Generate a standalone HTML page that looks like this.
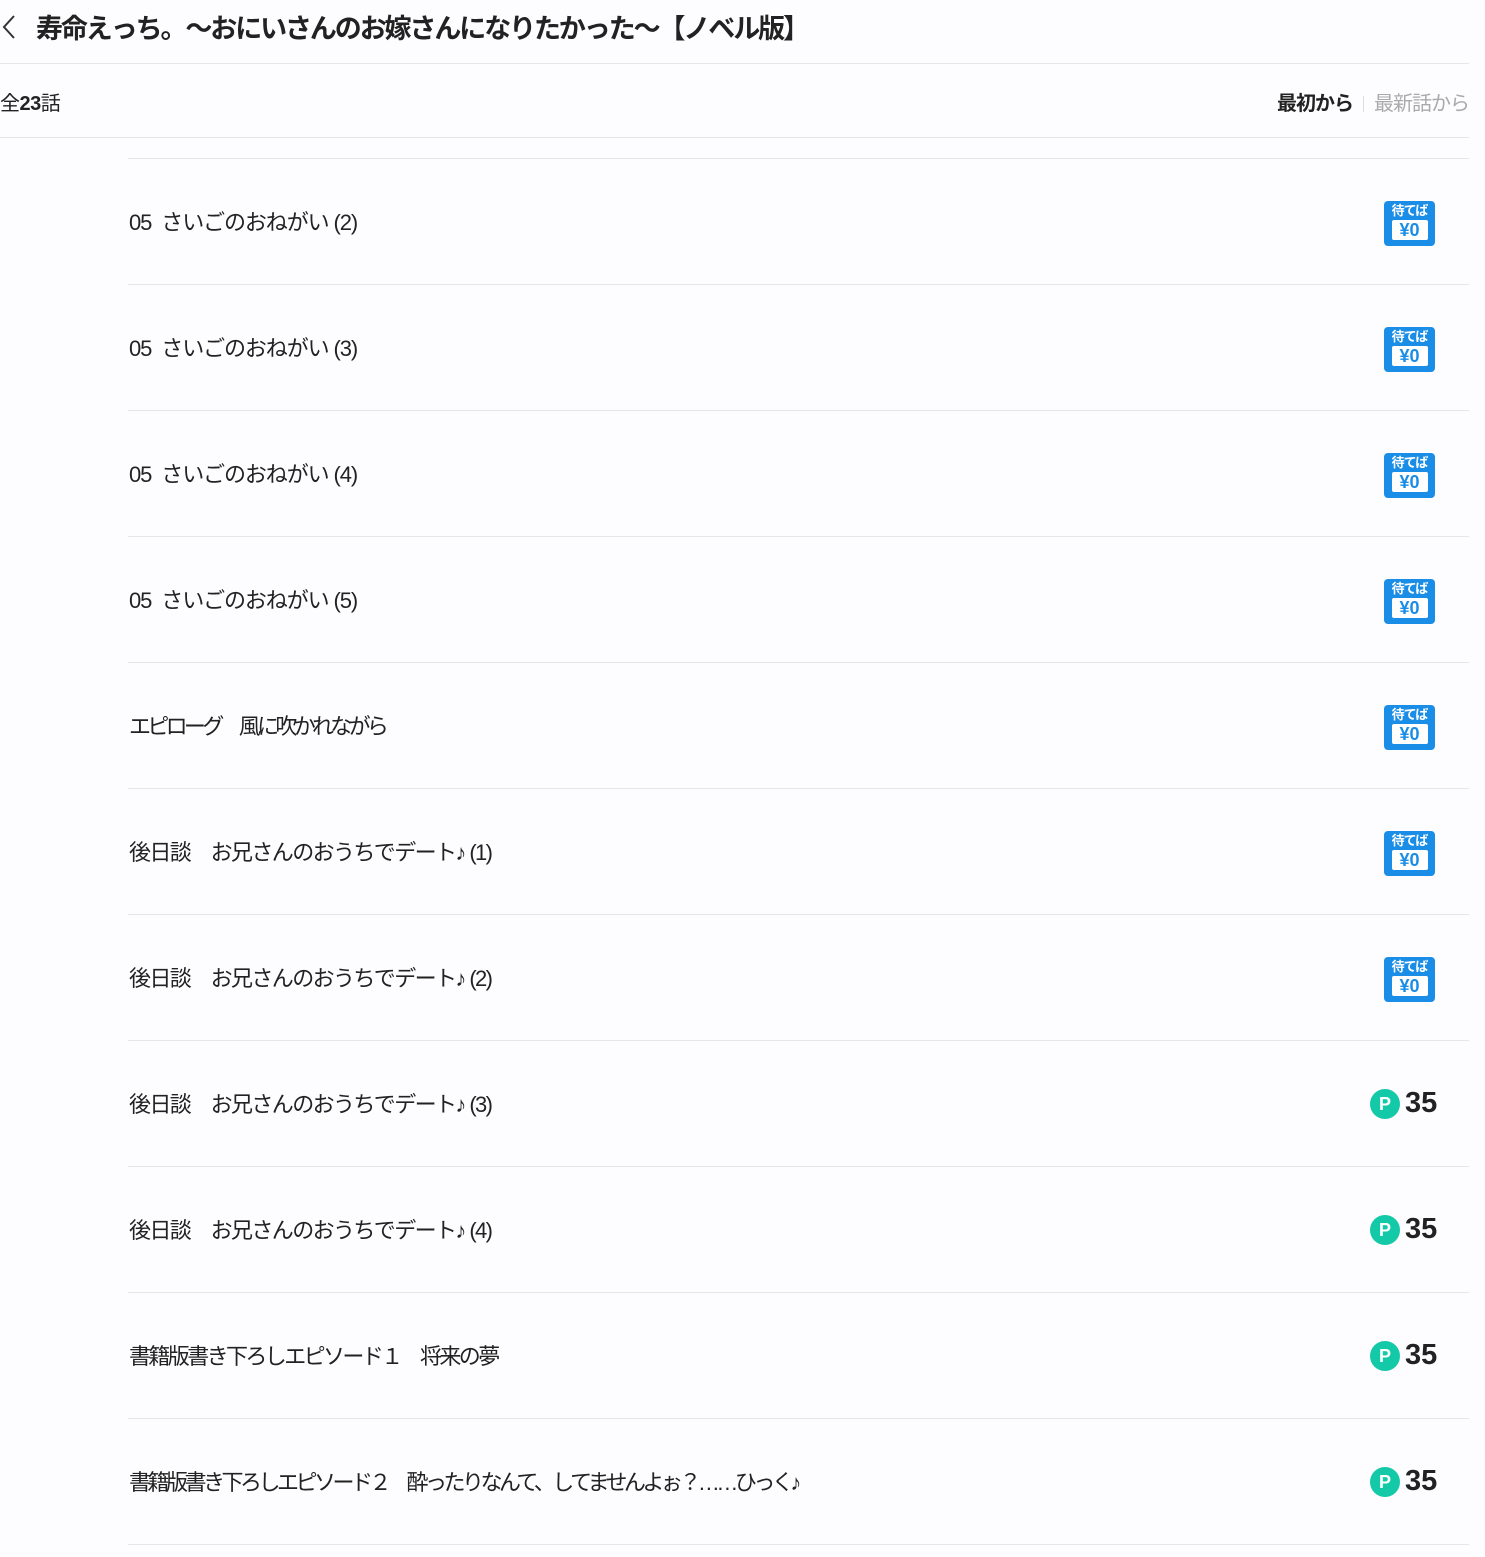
<!DOCTYPE html>
<html><head><meta charset="utf-8"><style>
body{margin:0;background:#fdfcfe;width:1485px;height:1557px;overflow:hidden;font-family:"Liberation Sans","Noto Sans CJK JP",sans-serif;color:#222}
.hdr{position:absolute;left:0;top:0;width:1469px;height:63px;border-bottom:1px solid #e6e6e6}
.hdr svg{position:absolute;left:2px;top:14px}
.hdr h1{position:absolute;left:36px;top:7px;margin:0;font-size:27px;font-weight:bold;letter-spacing:-2.1px;white-space:nowrap}
.bar{position:absolute;left:0;top:64px;width:1469px;height:73px;border-bottom:1px solid #e6e6e6;font-size:20px}
.bar .l{position:absolute;left:0;top:23px;letter-spacing:-0.5px}
.bar .r{position:absolute;right:0;top:23px;font-size:20px;letter-spacing:-1px}
.bar .r b{color:#222}.bar .r span{color:#aaa}
.sep{display:inline-block;width:1px;height:16px;background:#ddd;margin:0 10px;vertical-align:-2px}
.row{position:absolute;left:128px;width:1341px;height:125px;border-top:1px solid #e6e6e6}
.row .t{position:absolute;left:1px;top:46px;font-size:22px;white-space:nowrap;color:#222}
.badge{position:absolute;left:1256px;top:42px;width:51px;height:45px;background:#1a8de6;border-radius:4px;color:#fff;text-align:center}
.badge .a{font-size:13px;font-weight:bold;line-height:14px;margin-top:3px;letter-spacing:-1px}
.badge .b{margin:2px auto 0;width:36px;height:20px;background:#fff;color:#1a8de6;border-radius:2px;font-size:18px;font-weight:bold;line-height:20px}
.pt{position:absolute;left:1242px;top:46px;white-space:nowrap}
.pt i{display:inline-block;width:30px;height:30px;border-radius:50%;background:#13c9a8;color:#fff;font-style:normal;font-weight:bold;font-size:18px;line-height:30px;text-align:center;vertical-align:middle}
.pt b{font-size:29px;vertical-align:middle;margin-left:5px;color:#222}
.end{position:absolute;left:128px;top:1544px;width:1341px;border-top:1px solid #e6e6e6}
</style></head><body>
<div class="hdr"><svg width="16" height="26" viewBox="0 0 16 26"><path d="M12 2L2 13l10 11" fill="none" stroke="#333" stroke-width="2"/></svg><h1>寿命えっち。～おにいさんのお嫁さんになりたかった～【ノベル版】</h1></div>
<div class="bar"><div class="l">全<b>23</b>話</div><div class="r"><b>最初から</b><span class="sep"></span><span>最新話から</span></div></div>

<div class="row" style="top:158px"><div class="t" style="letter-spacing:-1.1px">05&nbsp; さいごのおねがい (2)</div><div class="badge"><div class="a">待てば</div><div class="b">¥0</div></div></div>
<div class="row" style="top:284px"><div class="t" style="letter-spacing:-1.1px">05&nbsp; さいごのおねがい (3)</div><div class="badge"><div class="a">待てば</div><div class="b">¥0</div></div></div>
<div class="row" style="top:410px"><div class="t" style="letter-spacing:-1.1px">05&nbsp; さいごのおねがい (4)</div><div class="badge"><div class="a">待てば</div><div class="b">¥0</div></div></div>
<div class="row" style="top:536px"><div class="t" style="letter-spacing:-1.1px">05&nbsp; さいごのおねがい (5)</div><div class="badge"><div class="a">待てば</div><div class="b">¥0</div></div></div>
<div class="row" style="top:662px"><div class="t" style="letter-spacing:-3.7px">エピローグ　風に吹かれながら</div><div class="badge"><div class="a">待てば</div><div class="b">¥0</div></div></div>
<div class="row" style="top:788px"><div class="t" style="letter-spacing:-1.6px">後日談　お兄さんのおうちでデート♪ (1)</div><div class="badge"><div class="a">待てば</div><div class="b">¥0</div></div></div>
<div class="row" style="top:914px"><div class="t" style="letter-spacing:-1.6px">後日談　お兄さんのおうちでデート♪ (2)</div><div class="badge"><div class="a">待てば</div><div class="b">¥0</div></div></div>
<div class="row" style="top:1040px"><div class="t" style="letter-spacing:-1.6px">後日談　お兄さんのおうちでデート♪ (3)</div><div class="pt"><i>P</i><b>35</b></div></div>
<div class="row" style="top:1166px"><div class="t" style="letter-spacing:-1.6px">後日談　お兄さんのおうちでデート♪ (4)</div><div class="pt"><i>P</i><b>35</b></div></div>
<div class="row" style="top:1292px"><div class="t" style="letter-spacing:-2.6px">書籍版書き下ろしエピソード１　将来の夢</div><div class="pt"><i>P</i><b>35</b></div></div>
<div class="row" style="top:1418px"><div class="t" style="letter-spacing:-3.5px">書籍版書き下ろしエピソード２　酔ったりなんて、してませんよぉ？……ひっく♪</div><div class="pt"><i>P</i><b>35</b></div></div>
<div class="end"></div>
</body></html>
